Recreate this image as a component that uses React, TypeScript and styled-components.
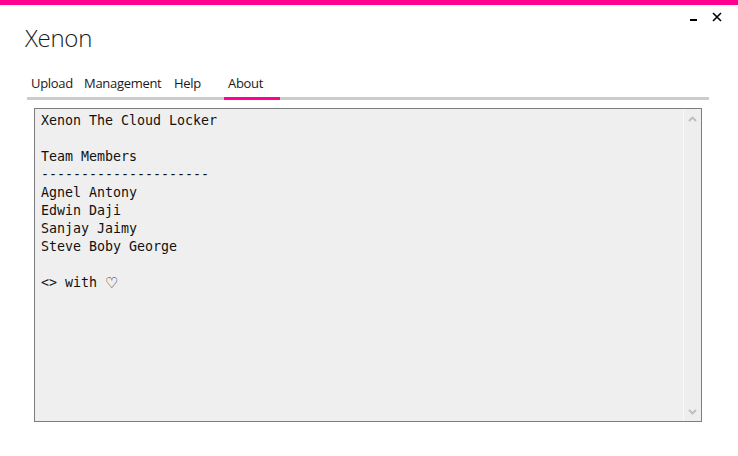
import React from "react";
import styled, { createGlobalStyle } from "styled-components";

const Global = createGlobalStyle`
  html, body { margin: 0; padding: 0; background: #ffffff; }
  body { width: 738px; height: 456px; overflow: hidden; font-family: "Open Sans", "Noto Sans", sans-serif; }
`;

const Window = styled.div`
  width: 738px;
  height: 456px;
  display: flex;
  flex-direction: column;
  background: #ffffff;
`;

const AccentBar = styled.div`
  height: 5px;
  background: #ff0090;
`;

const Header = styled.div`
  display: flex;
  justify-content: space-between;
  align-items: flex-start;
  padding: 0 0 0 25px;
`;

const Title = styled.h1`
  margin: 17px 0 0 0;
  font-family: "Open Sans", sans-serif;
  font-weight: 300;
  font-size: 24px;
  line-height: 32px;
  color: #1a1a1a;
  letter-spacing: -0.3px;
`;

const Controls = styled.div`
  display: flex;
  align-items: flex-start;
  gap: 11px;
  padding: 6px 15px 0 0;
`;

const ControlButton = styled.button`
  border: 0;
  background: transparent;
  padding: 0;
  margin: 0;
  width: 12px;
  height: 12px;
  display: flex;
  align-items: center;
  justify-content: center;
  cursor: default;
`;

const TabStrip = styled.div`
  display: flex;
  margin: 16px 29px 0 27px;
  height: 27px;
  border-bottom: 3px solid #cccccc;
`;

const Tab = styled.div<{ $w: number; $active?: boolean }>`
  width: ${(p) => p.$w}px;
  box-sizing: border-box;
  padding: 2px 0 3px 4px;
  height: 30px;
  margin-bottom: -3px;
  display: flex;
  align-items: center;
  border-bottom: 3px solid ${(p) => (p.$active ? "#ff0090" : "transparent")};
  font-family: "Open Sans", sans-serif;
  font-size: 13px;
  letter-spacing: -0.3px;
  color: #1a1a1a;
  white-space: nowrap;
`;

const Body = styled.div`
  padding: 8px 36px 0 34px;
`;

const TextBox = styled.div`
  height: 314px;
  box-sizing: border-box;
  border: 1px solid #7d7d7d;
  background: #efefef;
  display: flex;
`;

const Content = styled.pre`
  flex: 1;
  margin: 0;
  padding: 3px 6px;
  font-family: "DejaVu Sans Mono", "Liberation Mono", monospace;
  font-size: 13.3px;
  line-height: 18px;
  color: #111111;
  white-space: pre;
  overflow: hidden;
`;

const Line = styled.div`
  display: flex;
  align-items: center;
  height: 18px;
`;

const Heart = styled.span`
  display: inline-block;
  margin-left: 8px;
  font-family: "DejaVu Sans", sans-serif;
  font-size: 15px;
  line-height: 18px;
  height: 18px;
  color: #222222;
`;

const ScrollTrack = styled.div`
  width: 17px;
  border-left: 1px solid #f8f8f8;
  background: #eeeeee;
  display: flex;
  flex-direction: column;
  justify-content: space-between;
  align-items: center;
  padding: 7px 0 6px;
`;

const Chevron = ({ up }: { up?: boolean }) => (
  <svg width="9" height="6" viewBox="0 0 9 6">
    <path
      d={up ? "M1 5 L4.5 1.5 L8 5" : "M1 1 L4.5 4.5 L8 1"}
      stroke="#bdbdbd"
      strokeWidth="1.8"
      fill="none"
    />
  </svg>
);

const text = `Xenon The Cloud Locker

Team Members
---------------------
Agnel Antony
Edwin Daji
Sanjay Jaimy
Steve Boby George
`;

export default function App() {
  return (
    <Window>
      <Global />
      <AccentBar />
      <Header>
        <Title>Xenon</Title>
        <Controls>
          <ControlButton aria-label="minimize">
            <svg width="8" height="12" viewBox="0 0 8 12">
              <rect x="0" y="8" width="7" height="2" fill="#000" />
            </svg>
          </ControlButton>
          <ControlButton aria-label="close">
            <svg width="10" height="10" viewBox="0 0 10 10">
              <path d="M1 1 L9 9 M9 1 L1 9" stroke="#000" strokeWidth="1.6" />
            </svg>
          </ControlButton>
        </Controls>
      </Header>
      <TabStrip>
        <Tab $w={53}>Upload</Tab>
        <Tab $w={90}>Management</Tab>
        <Tab $w={54}>Help</Tab>
        <Tab $w={56} $active>
          About
        </Tab>
      </TabStrip>
      <Body>
        <TextBox>
          <Content>
            {text}
            {"\n"}
            <Line>
              <span>{"<> with"}</span>
              <Heart>{"\u2661"}</Heart>
            </Line>
          </Content>
          <ScrollTrack>
            <Chevron up />
            <Chevron />
          </ScrollTrack>
        </TextBox>
      </Body>
    </Window>
  );
}
